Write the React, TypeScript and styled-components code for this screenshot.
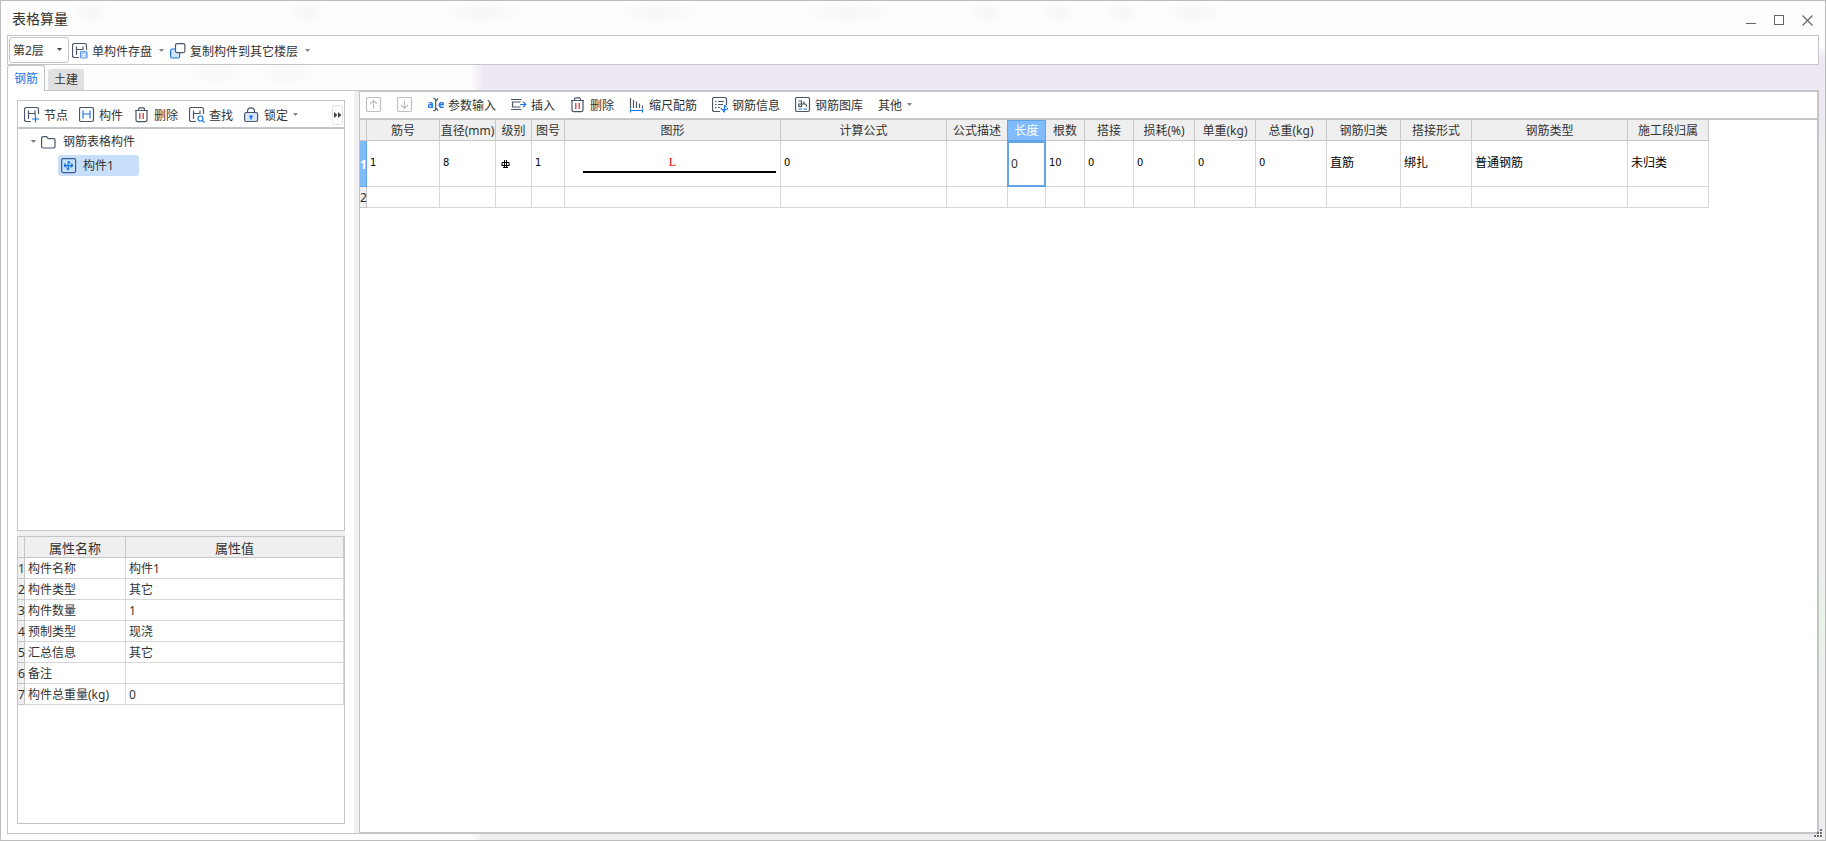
import React from "react";
import styled, { createGlobalStyle, css } from "styled-components";

const ui = `"Noto Sans", "Noto Sans CJK SC", sans-serif`;
const line = "#c4c5c9";
const ink = "#4d5666";
const blue = "#1a76e6";
const sel = "#80bcfc";
const selLine = "#62a4e8";

const Global = createGlobalStyle`
  *, *::before, *::after { box-sizing: border-box; }
  body { margin: 0; font: 12px/16px ${ui}; color: #333; }
  button, input, select { font: inherit; color: inherit; margin: 0; padding: 0; border: 0; background: none; }
  svg { display: block; flex: none; }
`;

/* ---------- window ---------- */

const smudge = (x: number, y: number, w: number, h: number) =>
  `radial-gradient(ellipse ${w}px ${h}px at ${x}px ${y}px, rgba(0,0,0,.022), rgba(0,0,0,.015) 50%, transparent)`;

const Window = styled.div`
  position: relative;
  display: flex;
  flex-direction: column;
  height: 100vh;
  padding: 0 6px 6px;
  border: 1px solid #bcbcbc;
  background:
    ${smudge(90, 11, 18, 14)}, ${smudge(306, 11, 18, 14)}, ${smudge(482, 12, 42, 12)},
    ${smudge(656, 12, 42, 12)}, ${smudge(848, 12, 48, 12)}, ${smudge(985, 12, 18, 12)},
    ${smudge(1057, 12, 18, 12)}, ${smudge(1122, 12, 18, 12)}, ${smudge(1192, 12, 32, 12)},
    ${smudge(215, 72, 26, 12)}, ${smudge(284, 72, 30, 12)},
    linear-gradient(90deg, #fdfdfd 470px, transparent 482px),
    linear-gradient(#fdfdfd 46px, #eee8f2 58px, #eee8f2 110px, #eeeeee 150px, #eeeeee 560px, #e9f3e6 620px, #eeeeee 680px);
`;

const TitleBar = styled.header`
  display: flex;
  align-items: center;
  justify-content: space-between;
  flex: none;
  height: 34px;
  padding: 0 6px 0 5px;
`;

const Title = styled.h1`
  margin: 0;
  padding-top: 2px;
  font-size: 14px;
  line-height: 20px;
  font-weight: 400;
`;

const WindowButtons = styled.div`
  display: flex;
  gap: 17px;
  padding-top: 4px;
`;

const IconButton = styled.button`
  display: block;
`;

const TopBar = styled.div`
  display: flex;
  align-items: center;
  flex: none;
  height: 30px;
  padding-left: 1px;
  border: 1px solid ${line};
  background: #fff;
`;

const SelectBox = styled.div`
  position: relative;
  display: flex;
  align-items: center;
  width: 60px;
  height: 26px;
  margin-right: 3px;
  border: 1px solid #c4c4c4;
  border-radius: 3px;
  background: #fff;
  svg { position: absolute; right: 5px; pointer-events: none; }
`;

const FloorSelect = styled.select`
  appearance: none;
  width: 100%;
  height: 100%;
  padding: 2px 0 0 3px;
`;

const ToolButton = styled.button`
  display: flex;
  align-items: center;
  gap: 4px;
  white-space: nowrap;
`;

const Label = styled.span`
  padding-top: 2px;
`;

const TopTools = styled.div`
  display: flex;
  gap: 5px;
  padding-top: 1px;
`;

const CaretSlot = styled.span`
  padding-left: 2px;
`;

/* ---------- tabs ---------- */

const Tabs = styled.div`
  display: flex;
  align-items: flex-end;
  flex: none;
  height: 25px;
  gap: 3px;
`;

const Tab = styled.button<{ $active?: boolean }>`
  position: relative;
  height: 21px;
  padding: 0 6px;
  border-radius: 3px 3px 0 0;
  background: #e0e0e0;
  ${(p) =>
    p.$active &&
    css`
      height: 26px;
      margin-bottom: -1px;
      z-index: 1;
      border: 1px solid ${line};
      border-bottom: 0;
      background: #fff;
      color: ${blue};
    `}
`;

const Pane = styled.main`
  display: flex;
  flex: 1;
  min-height: 0;
  border: 1px solid ${line};
  background: #fff;
`;

/* ---------- left side ---------- */

const Side = styled.section`
  display: flex;
  flex-direction: column;
  flex: none;
  width: 346px;
  padding: 9px;
`;

const Splitter = styled.div`
  flex: none;
  width: 5px;
  background: #efefef;
`;

const RowSplitter = styled.div`
  flex: none;
  height: 5px;
  background: #efefef;
`;

const TreeBox = styled.div`
  flex: 3 1 431px;
  min-height: 0;
  border: 1px solid ${line};
`;

const SideBar = styled.div`
  display: flex;
  align-items: center;
  justify-content: space-between;
  height: 28px;
  padding: 2px 1px 0 6px;
  border-bottom: 2px solid ${line};
`;

const SideTools = styled.div`
  display: flex;
  gap: 11px;
`;

const MoreButton = styled.button`
  display: grid;
  place-items: center;
  width: 11px;
  height: 20px;
  border: 1px solid #e2e2e2;
  border-radius: 3px;
`;

const Tree = styled.ul`
  list-style: none;
  margin: 0;
  padding: 3px 0 0 12px;
`;

const Branch = styled.div`
  display: flex;
  align-items: center;
  height: 20px;
  gap: 4px;
  span { padding-left: 3px; }
`;

const Leaves = styled.ul`
  list-style: none;
  margin: 3px 0 0 28px;
  padding: 0;
`;

const Leaf = styled.li`
  display: flex;
  align-items: center;
  width: 81px;
  height: 21px;
  padding-left: 3px;
  gap: 6px;
  border-radius: 3px;
  background: #c8dff9;
`;

const PropBox = styled.div`
  flex: 2 1 288px;
  min-height: 0;
  border: 1px solid ${line};
`;

/* ---------- tables ---------- */

const Table = styled.table<{ $fill?: boolean }>`
  width: ${(p) => (p.$fill ? "100%" : "1349px")};
  table-layout: fixed;
  border-collapse: separate;
  border-spacing: 0;
`;

const Col = styled.col<{ $w?: number }>`
  width: ${(p) => (p.$w ? `${p.$w}px` : "auto")};
`;

const Head = styled.th<{ $big?: boolean; $on?: boolean }>`
  height: 21px;
  padding: 2px 0 0;
  border: solid #c6c6c6;
  border-width: 0 1px 1px 0;
  background: #efefef;
  font-weight: 400;
  font-size: ${(p) => (p.$big ? 13 : 12)}px;
  white-space: nowrap;
  ${(p) =>
    p.$on &&
    css`
      border-color: ${selLine};
      background: ${sel};
      color: #fff;
      box-shadow: -1px 0 ${selLine}, inset 0 1px ${selLine};
    `}
`;

const RowHead = styled.th<{ $on?: boolean }>`
  height: 21px;
  padding: 2px 0 0;
  border: solid #c6c6c6;
  border-width: 0 1px 1px 0;
  background: #efefef;
  font-weight: 400;
  text-align: left;
  ${(p) =>
    p.$on &&
    css`
      border-color: ${selLine};
      background: ${sel};
      color: #fff;
      font-weight: 700;
    `}
`;

const Cell = styled.td`
  height: 21px;
  padding: 2px 0 0 3px;
  border: solid #d6d6d6;
  border-width: 0 1px 1px 0;
  white-space: nowrap;
`;

const BarCell = styled(Cell)<{ $num?: boolean }>`
  height: 46px;
  padding: 0 0 2px 3px;
  color: #000;
  ${(p) => p.$num && `font-family: "DejaVu Sans Condensed", sans-serif; font-size: 11px;`}
`;

const GradeCell = styled(BarCell)`
  padding: 0 0 0 5px;
`;

const EditCell = styled(Cell)`
  height: 46px;
  padding: 0;
  border: 2px solid ${selLine};
  border-left-width: 1px;
  box-shadow: -1px 0 ${selLine};
`;

const LengthInput = styled.input`
  display: block;
  width: 100%;
  height: 42px;
  padding: 0 0 2px 2px;
  outline: 0;
`;

const ShapeCell = styled(Cell)`
  height: 46px;
  padding: 0 4px 0 18px;
`;

const Bar = styled.div`
  padding: 0 14px 1px 0;
  border-bottom: 2px solid #000;
  color: #f00;
  font: 12px/16px "Liberation Serif", serif;
  text-align: center;
`;

/* ---------- right side ---------- */

const Work = styled.section`
  flex: 1;
  min-width: 0;
  border: 1px solid ${line};
  overflow: hidden;
`;

const WorkBar = styled.div`
  display: flex;
  align-items: center;
  height: 28px;
  gap: 15px;
  padding-left: 6px;
  border-bottom: 2px solid ${line};
`;

const Arrows = styled.div`
  display: flex;
  gap: 15px;
`;

const Grip = styled.div`
  position: absolute;
  right: 3px;
  bottom: 3px;
  cursor: nwse-resize;
`;

/* ---------- icons ---------- */

type IconProps = { children: React.ReactNode; w?: number; h?: number; c?: string };
const Icon = ({ children, w = 16, h = 16, c = ink }: IconProps) => (
  <svg width={w} height={h} viewBox={`0 0 ${w} ${h}`} fill="none" stroke={c} strokeWidth="1.2" aria-hidden="true">
    {children}
  </svg>
);

const Caret = ({ c = "#858585" }: { c?: string }) => (
  <svg width="7" height="4" viewBox="0 0 7 4" aria-hidden="true">
    <path d="M1 0h5L3.5 3z" fill={c} />
  </svg>
);

const openFrame = "M8 14.5H2.5Q.5 14.5 .5 12.5V2.5Q.5 .5 2.5 .5H12.5Q14.5 .5 14.5 2.5V8";

const NodeIcon = () => (
  <Icon>
    <path d="M7 14.5H2.5Q.5 14.5 .5 12.5V2.5Q.5 .5 2.5 .5H12.5Q14.5 .5 14.5 2.5V7M4.5 3.5v8.5M4.5 6.5h6.5M11 3.5v5" />
    <path d="M11.5 8.5v7M8 12h7" stroke={blue} />
  </Icon>
);
const MemberIcon = () => (
  <Icon>
    <rect x=".5" y=".5" width="14" height="14" rx="1.5" />
    <path d="M4 3.5v8M11 3.5v8M4 7h7" stroke={blue} />
  </Icon>
);
const TrashIcon = () => (
  <Icon>
    <path d="M1 3.5h13M4.5 3.5V2.2Q4.5 .8 5.9 .8H9.1Q10.5 .8 10.5 2.2V3.5M2 3.5V13Q2 14.6 3.8 14.6H11.2Q13 14.6 13 13V3.5" />
    <path d="M5.8 6v6M9.2 6v6" stroke="#d9232e" />
  </Icon>
);
const FindIcon = () => (
  <Icon>
    <path d="M7 14.5H2.5Q.5 14.5 .5 12.5V2.5Q.5 .5 2.5 .5H12.5Q14.5 .5 14.5 2.5V7M4.5 3.5v8.5M4.5 6.5h6.5M11 3.5v3.5" />
    <circle cx="11.5" cy="11.5" r="2.5" stroke={blue} />
    <path d="M13.3 13.3l2.2 2.2" stroke={blue} />
  </Icon>
);
const LockIcon = () => (
  <Icon>
    <path d="M3.5 5.5V4Q3.7 .8 7 .8T10.5 4V5.5" />
    <rect x=".6" y="5.5" width="13" height="9" rx="1.5" fill="#d3e5fb" />
    <path d="M7 8.5v4" stroke={blue} strokeWidth="1.6" />
    <path d="M5.2 9.5h3.6" stroke={blue} strokeWidth="1.6" />
  </Icon>
);
const SaveIcon = () => (
  <Icon>
    <path d="M7 14.5H2.5Q.5 14.5 .5 12.5V2.5Q.5 .5 2.5 .5H12.5Q14.5 .5 14.5 2.5V7M4.5 3.5v8.5M4.5 6.5h6.5M11 3.5v3.5" />
    <rect x="8.5" y="8.5" width="6.5" height="6.5" rx="1" fill="#a9cdf8" stroke="#5b9eee" />
    <path d="M10 11.5h3.5M10.5 14.5v-1.5h2.5v1.5" stroke="#fff" strokeWidth=".8" />
  </Icon>
);
const CopyIcon = () => (
  <Icon>
    <rect x=".6" y="6" width="9" height="9" rx="1.5" fill="#d3e5fb" stroke={blue} />
    <rect x="5.5" y=".6" width="9.4" height="9" rx="1.5" fill="#fff" />
  </Icon>
);
const FolderIcon = () => (
  <Icon w={15} h={13}>
    <path d="M.6 2Q.6 .6 2 .6H5.5L7.2 2.6H12.8Q14 2.6 14 4V10.8Q14 12 12.8 12H2Q.6 12 .6 10.8Z" />
  </Icon>
);
const LeafIcon = () => (
  <Icon>
    <rect x=".6" y=".6" width="14" height="14" rx="1.5" stroke="#365f92" />
    <path d="M7.2 3.2V9M7.2 3.4Q9 3.8 9 5.6M5 5.8Q3.2 6 3.4 7.6H11.6Q11.7 6.2 10 5.8M3.4 7.6Q3.8 9 5.4 9M11.6 7.6Q11.2 9 9.4 9M7.6 12V9M7.6 12Q5.8 11.4 6 9.6" stroke={blue} />
  </Icon>
);
const ArrowIcon = ({ down }: { down?: boolean }) => (
  <Icon c="#bfbfbf">
    <rect x=".5" y=".5" width="14" height="14" rx="1.5" />
    {down ? <path d="M7.5 3.5v8M4 8l3.5 3.5L11 8" /> : <path d="M7.5 11.5v-8M4 7l3.5-3.5L11 7" />}
  </Icon>
);
const ParamIcon = () => (
  <Icon>
    <g fill={blue} stroke="none" fontFamily="Noto Sans, sans-serif" fontWeight="700" fontSize="11">
      <text x="-1" y="11">a</text>
      <text x="10" y="11">e</text>
    </g>
    <path d="M5.3 1.3Q7.7 1.3 7.7 3.2T10.1 1.3M7.7 3v9.2M5.3 13.7Q7.7 13.7 7.7 12T10.1 13.7" />
  </Icon>
);
const InsertIcon = () => (
  <Icon>
    <path d="M0 2.5h10.5M0 12.5h10.5M9 5.5V5H1.5v5H9V9.5" />
    <path d="M9 7.5h6M12 4.7L14.8 7.5L12 10.3" stroke={blue} />
  </Icon>
);
const ScaleIcon = () => (
  <Icon>
    <path d="M1.5 1v10M4.5 3v8M7.5 4.5V11M10.5 6.5V11M13.5 8.5V11" />
    <path d="M1 13.5h13M1.5 11.5v4M13.5 11.5v4" stroke={blue} />
  </Icon>
);
const InfoIcon = () => (
  <Icon>
    <path d={openFrame} />
    <path d="M3 4.5h1.5M6 4.5h6M3 7.5h1.5M6 7.5h5M3 10.5h1.5M6 10.5h2" />
    <path d="M12.5 8v7.5M9.7 10.8Q8.6 12.4 10.5 12.5H14.4Q16.2 12.4 15.2 10.8M12.5 8.2Q14.2 9 13.8 10.4M12.5 15Q10.8 14.6 11 13.2" stroke={blue} />
  </Icon>
);
const LibraryIcon = () => (
  <Icon>
    <rect x=".5" y=".5" width="14" height="14" rx="1.5" />
    <path d="M3.5 4H6.5V9.5H3.8V7H10Q11.5 7 11.5 9.8M9 4.5v2.5" />
    <path d="M3.5 12h3.5M8.5 12H12" stroke={blue} />
  </Icon>
);
const GradeIcon = () => (
  <Icon w={10} h={10} c="#000">
    <path d="M3.5 1v8M5.5 1v8M1 3.5h7M.5 6.5h8M1 3.5v3M8 3.5v3M2 8.5h5" strokeWidth="1" />
  </Icon>
);

/* ---------- data ---------- */

const columns: [string, number][] = [
  ["筋号", 73], ["直径(mm)", 56], ["级别", 36], ["图号", 33], ["图形", 216], ["计算公式", 166],
  ["公式描述", 61], ["长度", 38], ["根数", 39], ["搭接", 49], ["损耗(%)", 61], ["单重(kg)", 61],
  ["总重(kg)", 71], ["钢筋归类", 74], ["搭接形式", 71], ["钢筋类型", 156], ["施工段归属", 81],
];

const properties = [
  ["构件名称", "构件1"], ["构件类型", "其它"], ["构件数量", "1"], ["预制类型", "现浇"],
  ["汇总信息", "其它"], ["备注", ""], ["构件总重量(kg)", "0"],
];

const sideTools = [
  { label: "节点", icon: <NodeIcon /> },
  { label: "构件", icon: <MemberIcon /> },
  { label: "删除", icon: <TrashIcon /> },
  { label: "查找", icon: <FindIcon /> },
  { label: "锁定", icon: <LockIcon />, menu: true },
];

const workTools = [
  { label: "参数输入", icon: <ParamIcon /> },
  { label: "插入", icon: <InsertIcon /> },
  { label: "删除", icon: <TrashIcon /> },
  { label: "缩尺配筋", icon: <ScaleIcon /> },
  { label: "钢筋信息", icon: <InfoIcon /> },
  { label: "钢筋图库", icon: <LibraryIcon /> },
];

const gripDots = [[6, 0], [3, 3], [6, 3], [0, 6], [3, 6], [6, 6]];

export default function App() {
  return (
    <Window>
      <Global />
      <TitleBar>
        <Title>表格算量</Title>
        <WindowButtons>
          <IconButton aria-label="最小化">
            <Icon w={11} h={11} c="#666"><path d="M0 8.5h10" strokeWidth="1" /></Icon>
          </IconButton>
          <IconButton aria-label="最大化">
            <Icon w={11} h={11} c="#666"><rect x=".5" y=".5" width="9" height="9" strokeWidth="1" /></Icon>
          </IconButton>
          <IconButton aria-label="关闭">
            <Icon w={11} h={11} c="#666"><path d="M.5 .5l10 10M10.5 .5l-10 10" /></Icon>
          </IconButton>
        </WindowButtons>
      </TitleBar>

      <TopBar>
        <SelectBox>
          <FloorSelect aria-label="楼层" defaultValue="2">
            <option value="2">第2层</option>
          </FloorSelect>
          <Caret c="#444" />
        </SelectBox>
        <TopTools>
          <ToolButton><SaveIcon /><Label>单构件存盘</Label><CaretSlot><Caret /></CaretSlot></ToolButton>
          <ToolButton><CopyIcon /><Label>复制构件到其它楼层</Label><CaretSlot><Caret /></CaretSlot></ToolButton>
        </TopTools>
      </TopBar>

      <Tabs role="tablist">
        <Tab $active role="tab" aria-selected="true">钢筋</Tab>
        <Tab role="tab" aria-selected="false">土建</Tab>
      </Tabs>

      <Pane>
        <Side>
          <TreeBox>
            <SideBar>
              <SideTools>
                {sideTools.map((t) => (
                  <ToolButton key={t.label}>
                    {t.icon}<Label>{t.label}</Label>
                    {t.menu && <Caret />}
                  </ToolButton>
                ))}
              </SideTools>
              <MoreButton aria-label="更多">
                <svg width="8" height="6" viewBox="0 0 8 6"><path d="M0 0l3.5 3L0 6zM4 0l3.5 3L4 6z" fill="#444" /></svg>
              </MoreButton>
            </SideBar>
            <Tree>
              <li>
                <Branch><Caret c="#777" /><FolderIcon /><span>钢筋表格构件</span></Branch>
                <Leaves><Leaf><LeafIcon />构件1</Leaf></Leaves>
              </li>
            </Tree>
          </TreeBox>
          <RowSplitter />
          <PropBox>
            <Table $fill>
              <colgroup><Col $w={7} /><Col $w={101} /><Col /></colgroup>
              <thead>
                <tr><Head /><Head $big>属性名称</Head><Head $big>属性值</Head></tr>
              </thead>
              <tbody>
                {properties.map(([name, value], i) => (
                  <tr key={name}>
                    <RowHead>{i + 1}</RowHead>
                    <Cell>{name}</Cell>
                    <Cell>{value}</Cell>
                  </tr>
                ))}
              </tbody>
            </Table>
          </PropBox>
        </Side>
        <Splitter />
        <Work>
          <WorkBar>
            <Arrows>
              <IconButton aria-label="上移"><ArrowIcon /></IconButton>
              <IconButton aria-label="下移"><ArrowIcon down /></IconButton>
            </Arrows>
            {workTools.map((t, i) => (
              <ToolButton key={i}>{t.icon}<Label>{t.label}</Label></ToolButton>
            ))}
            <ToolButton><Label>其他</Label><Caret /></ToolButton>
          </WorkBar>
          <Table>
            <colgroup>
              <Col $w={7} />
              {columns.map(([name, w]) => <Col key={name} $w={w} />)}
            </colgroup>
            <thead>
              <tr>
                <Head />
                {columns.map(([name]) => <Head key={name} $on={name === "长度"}>{name}</Head>)}
              </tr>
            </thead>
            <tbody>
              <tr>
                <RowHead $on>1</RowHead>
                <BarCell $num>1</BarCell>
                <BarCell $num>8</BarCell>
                <GradeCell><GradeIcon /></GradeCell>
                <BarCell $num>1</BarCell>
                <ShapeCell><Bar>L</Bar></ShapeCell>
                <BarCell $num>0</BarCell>
                <BarCell />
                <EditCell><LengthInput aria-label="长度" defaultValue="0" /></EditCell>
                <BarCell $num>10</BarCell>
                <BarCell $num>0</BarCell>
                <BarCell $num>0</BarCell>
                <BarCell $num>0</BarCell>
                <BarCell $num>0</BarCell>
                <BarCell>直筋</BarCell>
                <BarCell>绑扎</BarCell>
                <BarCell>普通钢筋</BarCell>
                <BarCell>未归类</BarCell>
              </tr>
              <tr>
                <RowHead>2</RowHead>
                {columns.map(([name]) => <Cell key={name} />)}
              </tr>
            </tbody>
          </Table>
        </Work>
      </Pane>
      <Grip>
        <svg width="8" height="8" viewBox="0 0 8 8" fill="#6b7178">
          {gripDots.map(([x, y]) => <rect key={`${x}-${y}`} x={x} y={y} width="2" height="2" />)}
        </svg>
      </Grip>
    </Window>
  );
}
